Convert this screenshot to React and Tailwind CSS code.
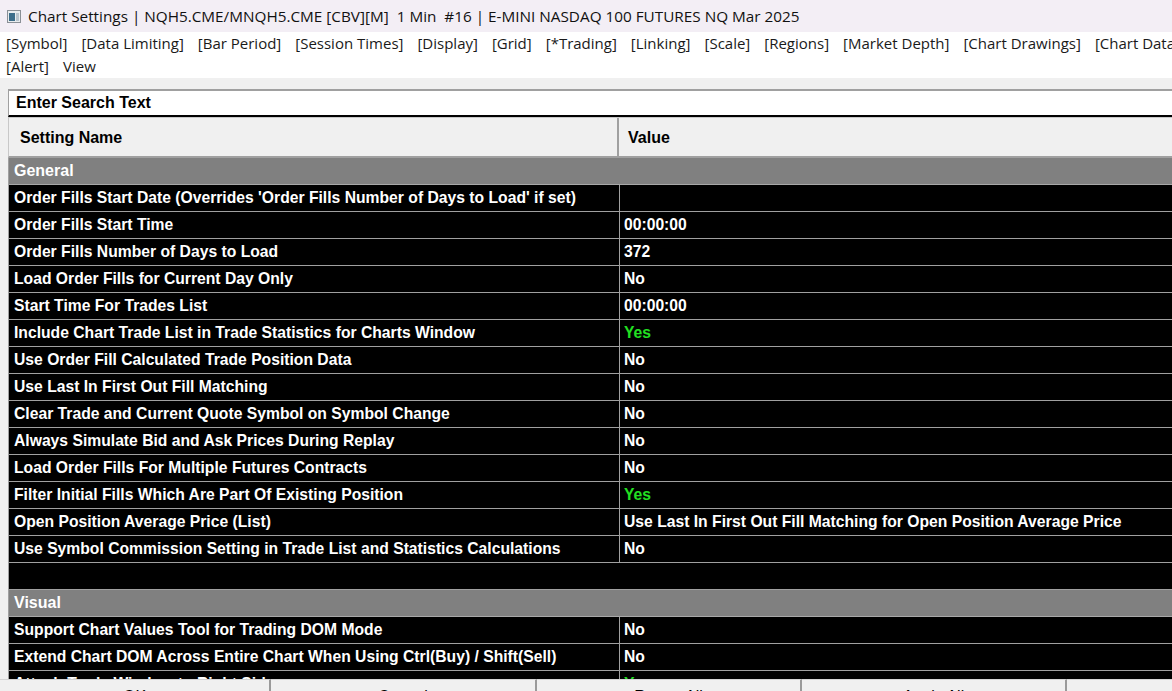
const menuRow1 = [
  "[Symbol]",
  "[Data Limiting]",
  "[Bar Period]",
  "[Session Times]",
  "[Display]",
  "[Grid]",
  "[*Trading]",
  "[Linking]",
  "[Scale]",
  "[Regions]",
  "[Market Depth]",
  "[Chart Drawings]",
  "[Chart Data]",
];

const general = [
  ["Order Fills Start Date (Overrides 'Order Fills Number of Days to Load' if set)", ""],
  ["Order Fills Start Time", "00:00:00"],
  ["Order Fills Number of Days to Load", "372"],
  ["Load Order Fills for Current Day Only", "No"],
  ["Start Time For Trades List", "00:00:00"],
  ["Include Chart Trade List in Trade Statistics for Charts Window", "Yes"],
  ["Use Order Fill Calculated Trade Position Data", "No"],
  ["Use Last In First Out Fill Matching", "No"],
  ["Clear Trade and Current Quote Symbol on Symbol Change", "No"],
  ["Always Simulate Bid and Ask Prices During Replay", "No"],
  ["Load Order Fills For Multiple Futures Contracts", "No"],
  ["Filter Initial Fills Which Are Part Of Existing Position", "Yes"],
  ["Open Position Average Price (List)", "Use Last In First Out Fill Matching for Open Position Average Price"],
  ["Use Symbol Commission Setting in Trade List and Statistics Calculations", "No"],
];

const visual = [
  ["Support Chart Values Tool for Trading DOM Mode", "No"],
  ["Extend Chart DOM Across Entire Chart When Using Ctrl(Buy) / Shift(Sell)", "No"],
  ["Attach Trade Window to Right Side", "Yes"],
];

const buttons = [
  ["OK", "w-[271px]"],
  ["Cancel", "w-[266px]"],
  ["Revert All", "w-[265px]"],
  ["Apply All", "w-[265px]"],
  ["", "w-[120px]"],
];

function GroupRow({ label }) {
  return (
    <div className="h-[27px] shrink-0 bg-[#808080] border-b border-[#a8a8a8] flex items-center pl-[5px] text-white font-bold text-[16px]">
      {label}
    </div>
  );
}

function SettingRow({ name, value }) {
  return (
    <div className="h-[27px] shrink-0 bg-black border-b border-[#a0a0a0] flex items-center text-[15.7px] font-bold">
      <div className="w-[611px] shrink-0 pl-[5px] text-white whitespace-nowrap overflow-hidden border-r border-[#a0a0a0] h-full flex items-center">
        {name}
      </div>
      <div className={"pl-[4px] whitespace-nowrap " + (value === "Yes" ? "text-[#22e022]" : "text-white")}>
        {value}
      </div>
    </div>
  );
}

export default function App() {
  return (
    <div className="w-[1172px] h-[691px] overflow-hidden flex flex-col bg-[#f0f0f0]">
      {/* title bar */}
      <div className="h-[32px] shrink-0 bg-[#f3eef5] flex items-center pl-[7px] font-['Open_Sans',sans-serif] text-[15.3px] text-[#111]">
        <svg width="14" height="13" viewBox="0 0 14 13" className="mr-[7px]">
          <rect x="0.5" y="0.5" width="13" height="12" fill="#e8ecee" stroke="#8a9096" />
          <rect x="2" y="3" width="6" height="8" fill="#3c6e8a" />
          <rect x="9" y="3" width="3" height="8" fill="#b8c4cc" />
        </svg>
        <span className="whitespace-pre">Chart Settings | NQH5.CME/MNQH5.CME [CBV][M]  1 Min  #16 | E-MINI NASDAQ 100 FUTURES NQ Mar 2025</span>
      </div>

      {/* menu */}
      <div className="h-[46px] shrink-0 bg-white font-['Open_Sans',sans-serif] text-[15px] text-[#1a1a1a] pl-[6px] leading-[23px] overflow-hidden">
        <div className="flex gap-x-[14px] whitespace-nowrap">
          {menuRow1.map((m) => (
            <span key={m}>{m}</span>
          ))}
        </div>
        <div className="flex gap-x-[14px]">
          <span>[Alert]</span>
          <span>View</span>
        </div>
      </div>

      <div className="h-[11px] shrink-0" />

      {/* settings area */}
      <div className="h-[590px] shrink-0 ml-[8px] flex flex-col overflow-hidden font-['Liberation_Sans',Arial,sans-serif]">
        <div className="h-[28px] shrink-0 bg-white border-t-2 border-l border-[#a0a0a0] border-b-2 border-b-black flex items-center pl-[7px] text-[16px] font-bold text-black">
          Enter Search Text
        </div>
        <div className="h-[41px] shrink-0 bg-[#f0f0f0] border-t border-l border-[#c8c8c8] border-b-2 border-b-[#a0a0a0] flex text-[16px] font-bold text-black">
          <div className="w-[610px] pl-[11px] pt-[2px] border-r-2 border-[#a0a0a0] flex items-center">Setting Name</div>
          <div className="pl-[9px] pt-[2px] flex items-center">Value</div>
        </div>
        <div className="flex flex-col border-l border-[#a0a0a0]">
          <GroupRow label="General" />
          {general.map(([n, v]) => (
            <SettingRow key={n} name={n} value={v} />
          ))}
          <div className="h-[27px] shrink-0 bg-black border-b border-[#a0a0a0]" />
          <GroupRow label="Visual" />
          {visual.map(([n, v]) => (
            <SettingRow key={n} name={n} value={v} />
          ))}
        </div>
      </div>

      {/* buttons */}
      <div className="h-[30px] shrink-0 flex font-['Liberation_Sans',Arial,sans-serif] text-[16px] text-black">
        {buttons.map(([b, w], i) => (
          <div
            key={i}
            className={w + " shrink-0 bg-[#f0f0f0] border-t border-r-2 border-[#d4d4d4] border-r-[#9a9a9a] flex justify-center pt-[5px]"}
          >
            {b}
          </div>
        ))}
      </div>
    </div>
  );
}
